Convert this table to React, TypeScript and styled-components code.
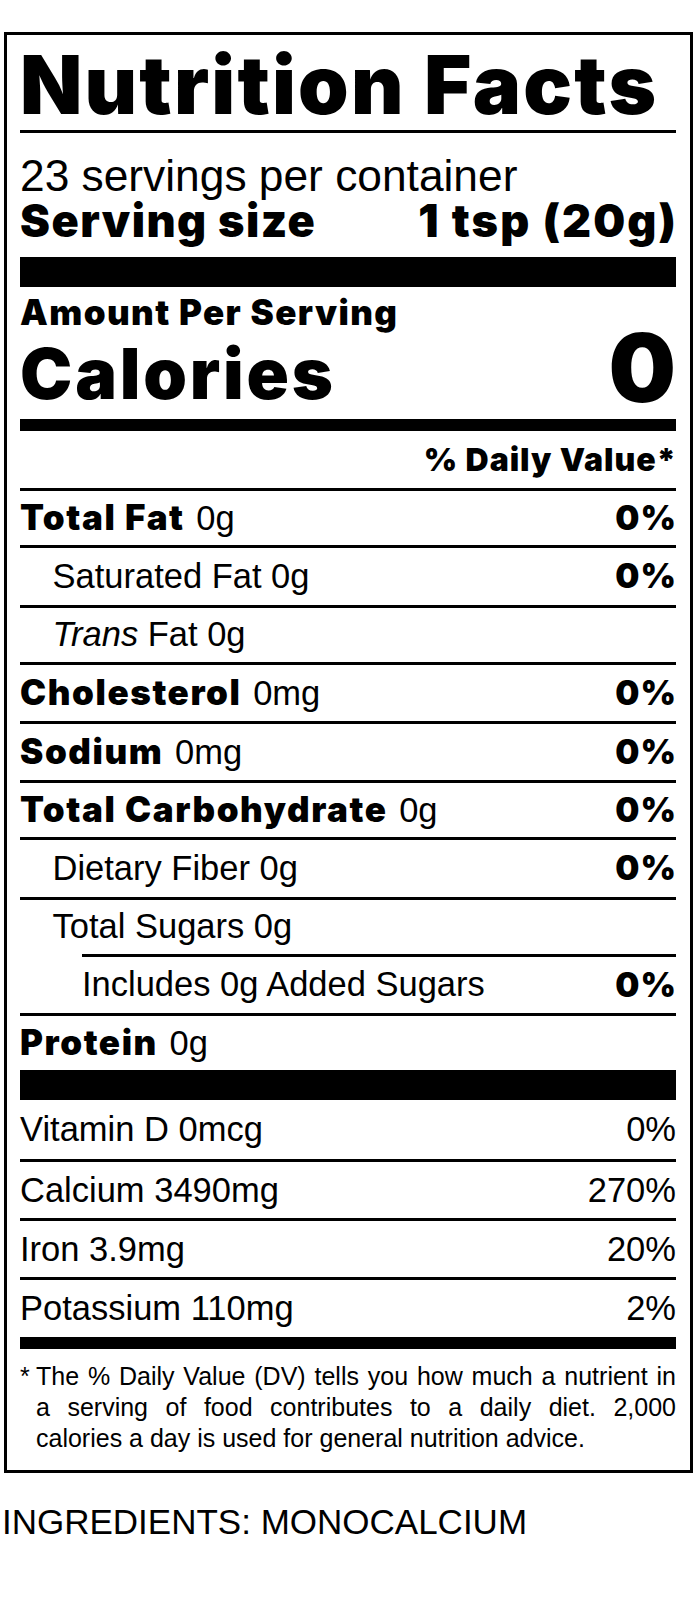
import React from "react";
import styled, { createGlobalStyle } from "styled-components";

const Global = createGlobalStyle`
  html, body { margin: 0; padding: 0; background: #fff; }
  body {
    font-family: "Liberation Sans", Arial, sans-serif;
    color: #000;
  }
`;

const HEAVY = `Inter, "Liberation Sans", Arial, sans-serif`;
const REG = `"Liberation Sans", Arial, sans-serif`;

const Page = styled.div`
  box-sizing: border-box;
  width: 700px;
  min-height: 1605px;
  padding: 32px 7px 0 4px;
`;

const Label = styled.section`
  border: 3px solid #000;
  padding: 0 14px 16px 13px;
`;

const Title = styled.h1`
  margin: 0;
  padding: 10px 0 4px;
  font-family: ${HEAVY};
  font-weight: 900;
  font-size: 81px;
  line-height: 1;
  letter-spacing: 2.2px;
  white-space: nowrap;
  border-bottom: 3px solid #000;
`;

const Servings = styled.div`
  padding-top: 21px;
  font-family: ${REG};
  font-size: 44.3px;
  line-height: 1;
  white-space: nowrap;
`;

const Heavy = styled.span<{ $size: number; $track?: number }>`
  font-family: ${HEAVY};
  font-weight: 900;
  font-size: ${(p) => p.$size}px;
  letter-spacing: ${(p) => p.$track ?? 0.045}em;
  line-height: 1;
  white-space: nowrap;
`;

const RightHeavy = styled(Heavy)`
  margin-right: -${(p) => p.$track ?? 0.045}em;
`;

const SplitLine = styled.div`
  display: flex;
  justify-content: space-between;
  align-items: baseline;
  line-height: 1;
`;

const Bar = styled.div<{ $h: number; $mt?: number }>`
  height: ${(p) => p.$h}px;
  margin-top: ${(p) => p.$mt ?? 0}px;
  background: #000;
`;

const Amount = styled.div`
  margin-top: 8px;
  line-height: 1;
`;

const CaloriesLine = styled.div`
  display: flex;
  justify-content: space-between;
  align-items: flex-end;
  margin-top: -2px;
  margin-bottom: 10px;
`;

const Zero = styled(RightHeavy)`
  line-height: 0.85;
`;

const DVHead = styled.div`
  height: 57px;
  display: flex;
  align-items: center;
  justify-content: flex-end;
  padding-top: 1px;
  box-sizing: border-box;
`;

const NutrientRow = styled.div<{ $pad?: number; $inset?: number; $h: number }>`
  box-sizing: border-box;
  height: ${(p) => p.$h}px;
  display: flex;
  align-items: center;
  justify-content: space-between;
  border-top: 3px solid #000;
  padding-left: ${(p) => p.$pad ?? 0}px;
  margin-left: ${(p) => p.$inset ?? 0}px;
  padding-bottom: 1px;
`;

const VitaminRow = styled.div<{ $first?: boolean; $h: number }>`
  box-sizing: border-box;
  height: ${(p) => p.$h}px;
  display: flex;
  align-items: center;
  justify-content: space-between;
  border-top: ${(p) => (p.$first ? "none" : "3px solid #000")};
`;

const Name = styled.span`
  font-family: ${REG};
  font-size: 34.5px;
  line-height: 1;
  white-space: nowrap;
`;

const BoldName = styled(Heavy)`
  margin-right: 0.06em;
`;

const Em = styled.em`
  font-style: italic;
`;

const RegPct = styled.span`
  font-family: ${REG};
  font-size: 34.5px;
  line-height: 1;
`;

const Footnote = styled.div`
  margin-top: 12px;
  display: grid;
  grid-template-columns: 16px 1fr;
  font-family: ${REG};
  font-size: 25px;
  line-height: 31px;
`;

const FootLine = styled.div<{ $last?: boolean }>`
  white-space: nowrap;
  text-align: ${(p) => (p.$last ? "left" : "justify")};
  text-align-last: ${(p) => (p.$last ? "left" : "justify")};
`;

const Ingredients = styled.div`
  margin: 31px 0 0 -2px;
  font-family: ${REG};
  font-size: 35px;
  line-height: 1;
  white-space: nowrap;
`;

type Nutrient = {
  bold?: string;
  italic?: string;
  text: string;
  pct?: string;
  pad?: number;
  inset?: number;
  h: number;
};

const nutrients: Nutrient[] = [
  { bold: "Total Fat", text: "0g", pct: "0%", h: 57 },
  { text: "Saturated Fat 0g", pct: "0%", pad: 32.5, h: 60 },
  { italic: "Trans", text: "Fat 0g", pad: 32.5, h: 57 },
  { bold: "Cholesterol", text: "0mg", pct: "0%", h: 59 },
  { bold: "Sodium", text: "0mg", pct: "0%", h: 59 },
  { bold: "Total Carbohydrate", text: "0g", pct: "0%", h: 57 },
  { text: "Dietary Fiber 0g", pct: "0%", pad: 32.5, h: 60 },
  { text: "Total Sugars 0g", pad: 32.5, h: 57 },
  { text: "Includes 0g Added Sugars", pct: "0%", inset: 62, h: 59 },
  { bold: "Protein", text: "0g", h: 57 },
];

const vitamins: [string, string, number][] = [
  ["Vitamin D 0mcg", "0%", 59],
  ["Calcium 3490mg", "270%", 59],
  ["Iron 3.9mg", "20%", 59],
  ["Potassium 110mg", "2%", 60],
];

export default function App() {
  return (
    <>
      <Global />
      <Page>
        <Label>
          <Title>Nutrition Facts</Title>
          <Servings>23 servings per container</Servings>
          <SplitLine>
            <Heavy $size={45} $track={0.032}>
              Serving size
            </Heavy>
            <RightHeavy $size={45} $track={0.047}>
              1 tsp (20g)
            </RightHeavy>
          </SplitLine>
          <Bar $h={30} $mt={14} />
          <Amount>
            <Heavy $size={35} $track={0.04}>
              Amount Per Serving
            </Heavy>
          </Amount>
          <CaloriesLine>
            <Heavy $size={70} $track={0.04}>
              Calories
            </Heavy>
            <Zero $size={95} $track={0}>
              0
            </Zero>
          </CaloriesLine>
          <Bar $h={12} />
          <DVHead>
            <RightHeavy $size={32} $track={0.03}>
              % Daily Value*
            </RightHeavy>
          </DVHead>
          {nutrients.map((n, i) => (
            <NutrientRow key={i} $pad={n.pad} $inset={n.inset} $h={n.h}>
              <Name>
                {n.bold && (
                  <>
                    <BoldName $size={35}>{n.bold}</BoldName>{" "}
                  </>
                )}
                {n.italic && (
                  <>
                    <Em>{n.italic}</Em>{" "}
                  </>
                )}
                {n.text}
              </Name>
              {n.pct && (
                <RightHeavy $size={34} $track={0.03}>
                  {n.pct}
                </RightHeavy>
              )}
            </NutrientRow>
          ))}
          <Bar $h={30} />
          {vitamins.map(([name, pct, h], i) => (
            <VitaminRow key={name} $first={i === 0} $h={h}>
              <Name>{name}</Name>
              <RegPct>{pct}</RegPct>
            </VitaminRow>
          ))}
          <Bar $h={12} />
          <Footnote>
            <span>*</span>
            <div>
              <FootLine>The % Daily Value (DV) tells you how much a nutrient in</FootLine>
              <FootLine>a serving of food contributes to a daily diet. 2,000</FootLine>
              <FootLine $last>calories a day is used for general nutrition advice.</FootLine>
            </div>
          </Footnote>
        </Label>
        <Ingredients>INGREDIENTS: MONOCALCIUM</Ingredients>
      </Page>
    </>
  );
}
